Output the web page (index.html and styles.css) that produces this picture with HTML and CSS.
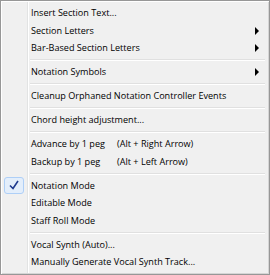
FILE: index.html
```html
<!DOCTYPE html>
<html lang="en">
<head>
  <meta charset="UTF-8">
  <title>Notation Menu</title>
  <link rel="stylesheet" href="styles.css">
</head>
<body>
  <div class="menu">
    <div class="item">Insert Section Text...</div>
    <div class="item sub">Section Letters</div>
    <div class="item sub">Bar-Based Section Letters</div>
    <div class="sep"></div>
    <div class="item sub">Notation Symbols</div>
    <div class="sep"></div>
    <div class="item">Cleanup Orphaned Notation Controller Events</div>
    <div class="sep"></div>
    <div class="item">Chord height adjustment...</div>
    <div class="sep"></div>
    <div class="item"><span class="label">Advance by 1 peg</span>(Alt + Right Arrow)</div>
    <div class="item"><span class="label">Backup by 1 peg</span>(Alt + Left Arrow)</div>
    <div class="sep"></div>
    <div class="item checked">
      <span class="check">
        <svg width="10" height="10" viewBox="0 0 10 10"><path d="M1 5.5 L4 8.5 L9 1" fill="none" stroke="#1e3a8f" stroke-width="1.6"/></svg>
      </span>
      Notation Mode
    </div>
    <div class="item">Editable Mode</div>
    <div class="item">Staff Roll Mode</div>
    <div class="sep"></div>
    <div class="item">Vocal Synth (Auto)...</div>
    <div class="item">Manually Generate Vocal Synth Track...</div>
  </div>
</body>
</html>
```
FILE: styles.css
```css
body {
  margin: 0;
  font-family: "Open Sans", "Noto Sans", sans-serif;
  font-size: 9.1px;
  color: #000;
}
.menu {
  width: 270px;
  height: 275px;
  box-sizing: border-box;
  border: 1px solid #979797;
  box-shadow: inset 1px 1px 0 #fff, inset -1px -1px 0 #d5d5d5;
  padding: 3px 4px 2px 2px;
  background-color: #f0f0f0;
  background-image: linear-gradient(to right, transparent 26px, #e2e3e3 26px, #e2e3e3 27px, #fff 27px, #fff 28px, transparent 28px);
}
.item {
  position: relative;
  height: 17.5px;
  line-height: 17.5px;
  padding-left: 28px;
  white-space: nowrap;
}
.label {
  display: inline-block;
  width: 86px;
}
.sub::after {
  content: "";
  position: absolute;
  right: 6px;
  top: 5px;
  border-left: 4px solid #000;
  border-top: 4px solid transparent;
  border-bottom: 4px solid transparent;
}
.sep {
  height: 0;
  margin: 2.5px 0 2px 27px;
  border-top: 1px solid #e0e0e0;
  border-bottom: 1px solid #fff;
}
.check {
  position: absolute;
  left: 1px;
  top: 0;
  width: 20px;
  height: 17px;
  box-sizing: border-box;
  border: 1px solid #aecff7;
  border-radius: 3px;
  background: #e3eefb;
  display: flex;
  align-items: center;
  justify-content: center;
}
```
